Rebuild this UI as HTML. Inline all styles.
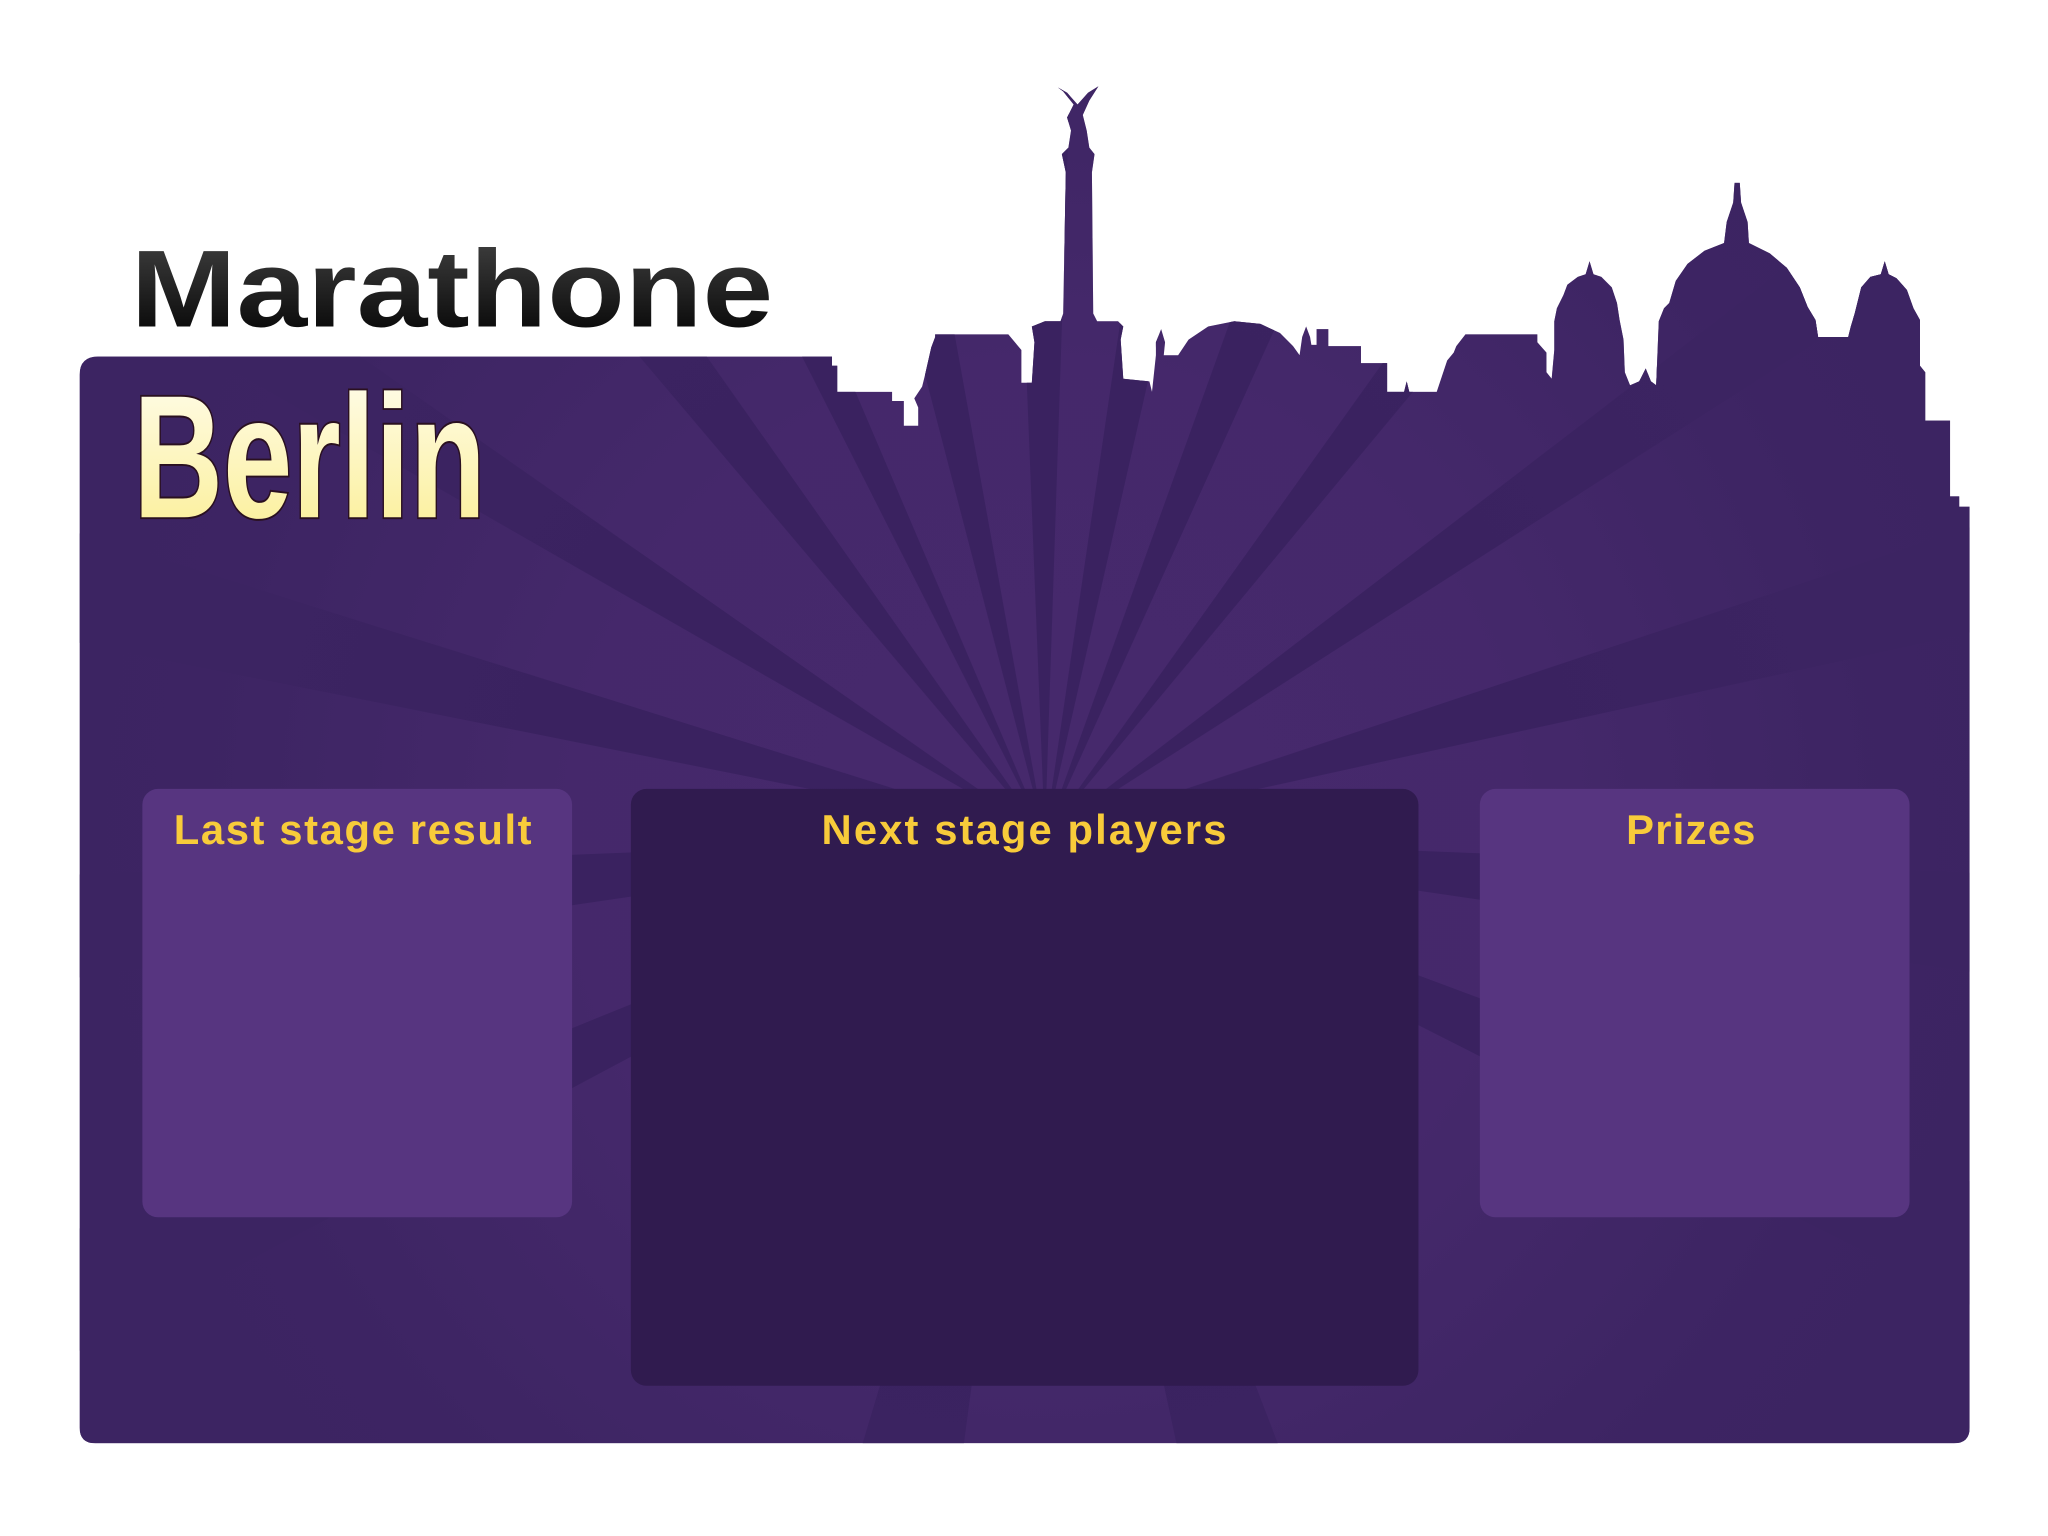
<!DOCTYPE html>
<html><head><meta charset="utf-8"><style>html,body{margin:0;padding:0;background:#fff;overflow:hidden;width:2048px;height:1536px}svg{display:block}</style></head>
<body>
<svg width="2048" height="1536" viewBox="0 0 1568 1176" xmlns="http://www.w3.org/2000/svg">
<defs>
<clipPath id="sky"><path d="M61,287 Q61,273 75,273 L637,273 L637,280 L641,280 L641,300 L683,300 L683,307 L692,307 L692,326 L703,326 L703,312 L700,305 L706,296 L708,288 L713,266 L716,258 L716,256 L772,256 L782,268 L782,293 L790,293 L792,262 L790,250 L800,246 L812,246 L814,240 L816,132 L813,118 L818,113 L820,100 L817,90 L822,80 L814,70 L810,67 L817,71 L825,80 L833,71 L841,66 L834,77 L829,88 L832,100 L834,113 L838,118 L836,132 L837,240 L840,246 L856,246 L860,250 L858,260 L860,290 L880,292 L882,300 L885,272 L885,262 L889,252 L892,262 L891,272 L902,272 L910,260 L925,250 L945,246 L965,248 L980,255 L990,265 L995,272 L997,258 L1000,250 L1003,258 L1004,264 L1008,264 L1008,252 L1017,252 L1017,265 L1042,265 L1042,278 L1062,278 L1062,300 L1075,300 L1077,292 L1079,300 L1100,300 L1108,276 L1113,270 L1115,265 L1122,256 L1177,256 L1177,262 L1184,270 L1184,285 L1188,290 L1190,268 L1190,246 L1192,236 L1197,226 L1200,218 L1208,212 L1214,210 L1217,200 L1220,210 L1226,212 L1234,220 L1238,232 L1240,245 L1243,260 L1244,285 L1248,295 L1255,292 L1260,282 L1264,292 L1268,295 L1270,246 L1274,236 L1278,232 L1283,215 L1292,202 L1305,192 L1320,186 L1322,170 L1327,155 L1328,140 L1332,140 L1333,155 L1338,170 L1339,186 L1355,194 L1368,205 L1378,220 L1384,235 L1390,245 L1392,258 L1415,258 L1417,250 L1420,240 L1425,220 L1432,212 L1440,210 L1443,200 L1446,210 L1452,213 L1460,222 L1465,236 L1470,245 L1470,280 L1474,285 L1474,322 L1493,322 L1493,380 L1500,380 L1500,388 L1508,388 L1508,1093 Q1508,1105 1496,1105 L73,1105 Q61,1105 61,1093 Z"/></clipPath>
<radialGradient id="fade" cx="800" cy="640" r="800" gradientUnits="userSpaceOnUse">
<stop offset="0" stop-color="#3c2462" stop-opacity="0"/>
<stop offset="0.45" stop-color="#3c2462" stop-opacity="0.1"/>
<stop offset="0.8" stop-color="#3c2462" stop-opacity="0.9"/>
<stop offset="1" stop-color="#3c2462" stop-opacity="1"/>
</radialGradient>
<linearGradient id="mg" x1="0" y1="0" x2="0" y2="1"><stop offset="0" stop-color="#444"/><stop offset="1" stop-color="#000"/></linearGradient>
<linearGradient id="bg" x1="0" y1="0" x2="0" y2="1"><stop offset="0" stop-color="#fffdf0"/><stop offset="1" stop-color="#fbee90"/></linearGradient>
</defs>
<g clip-path="url(#sky)">
<rect x="0" y="0" width="1568" height="1176" fill="#46296c"/>
<g fill="#3a2260" transform="translate(800,640)">
<path d="M0,0 L-1150,-1360 L-1030,-1460 Z"/>
<path d="M0,0 L-760,-1500 L-640,-1500 Z"/>
<path d="M0,0 L-390,-1500 L-270,-1500 Z"/>
<path d="M0,0 L-60,-1500 L50,-1500 Z"/>
<path d="M0,0 L220,-1500 L340,-1500 Z"/>
<path d="M0,0 L540,-1500 L680,-1500 Z"/>
<path d="M0,0 L1000,-1400 L1160,-1400 Z"/>
<path d="M0,0 L1500,-1150 L1500,-960 Z"/>
<path d="M0,0 L1500,-500 L1500,-330 Z"/>
<path d="M0,0 L1500,60 L1500,220 Z"/>
<path d="M0,0 L1500,560 L1500,760 Z"/>
<path d="M0,0 L-1500,-1050 L-1500,-860 Z"/>
<path d="M0,0 L-1500,-470 L-1500,-300 Z"/>
<path d="M0,0 L-1500,60 L-1500,220 Z"/>
<path d="M0,0 L-1500,610 L-1500,800 Z"/>
<path d="M0,0 L-180,600 L-80,600 Z"/>
<path d="M0,0 L130,600 L230,600 Z"/>
</g>
<rect x="0" y="0" width="1568" height="1176" fill="url(#fade)"/>
</g>
<text x="100" y="250" font-family="Liberation Sans, sans-serif" font-weight="bold" font-size="84" fill="url(#mg)" textLength="492" lengthAdjust="spacingAndGlyphs">Marathone</text>
<text x="102" y="396" font-family="Liberation Sans Narrow, Liberation Sans, sans-serif" font-weight="bold" font-size="134" fill="url(#bg)" stroke="#2a1020" stroke-width="3" paint-order="stroke" textLength="270" lengthAdjust="spacingAndGlyphs">Berlin</text>
<rect x="109" y="604" width="329" height="328" rx="12" fill="#573580"/>
<rect x="483" y="604" width="603" height="457" rx="12" fill="#301b4f"/>
<rect x="1133" y="604" width="329" height="328" rx="12" fill="#573580"/>
<g font-family="Liberation Sans, sans-serif" font-weight="bold" font-size="32" fill="#f8cb3a" lengthAdjust="spacingAndGlyphs">
<text x="133" y="646" textLength="274">Last stage result</text>
<text x="629" y="646" textLength="310">Next stage players</text>
<text x="1245" y="646" textLength="99">Prizes</text>
</g>
</svg>
</body></html>
